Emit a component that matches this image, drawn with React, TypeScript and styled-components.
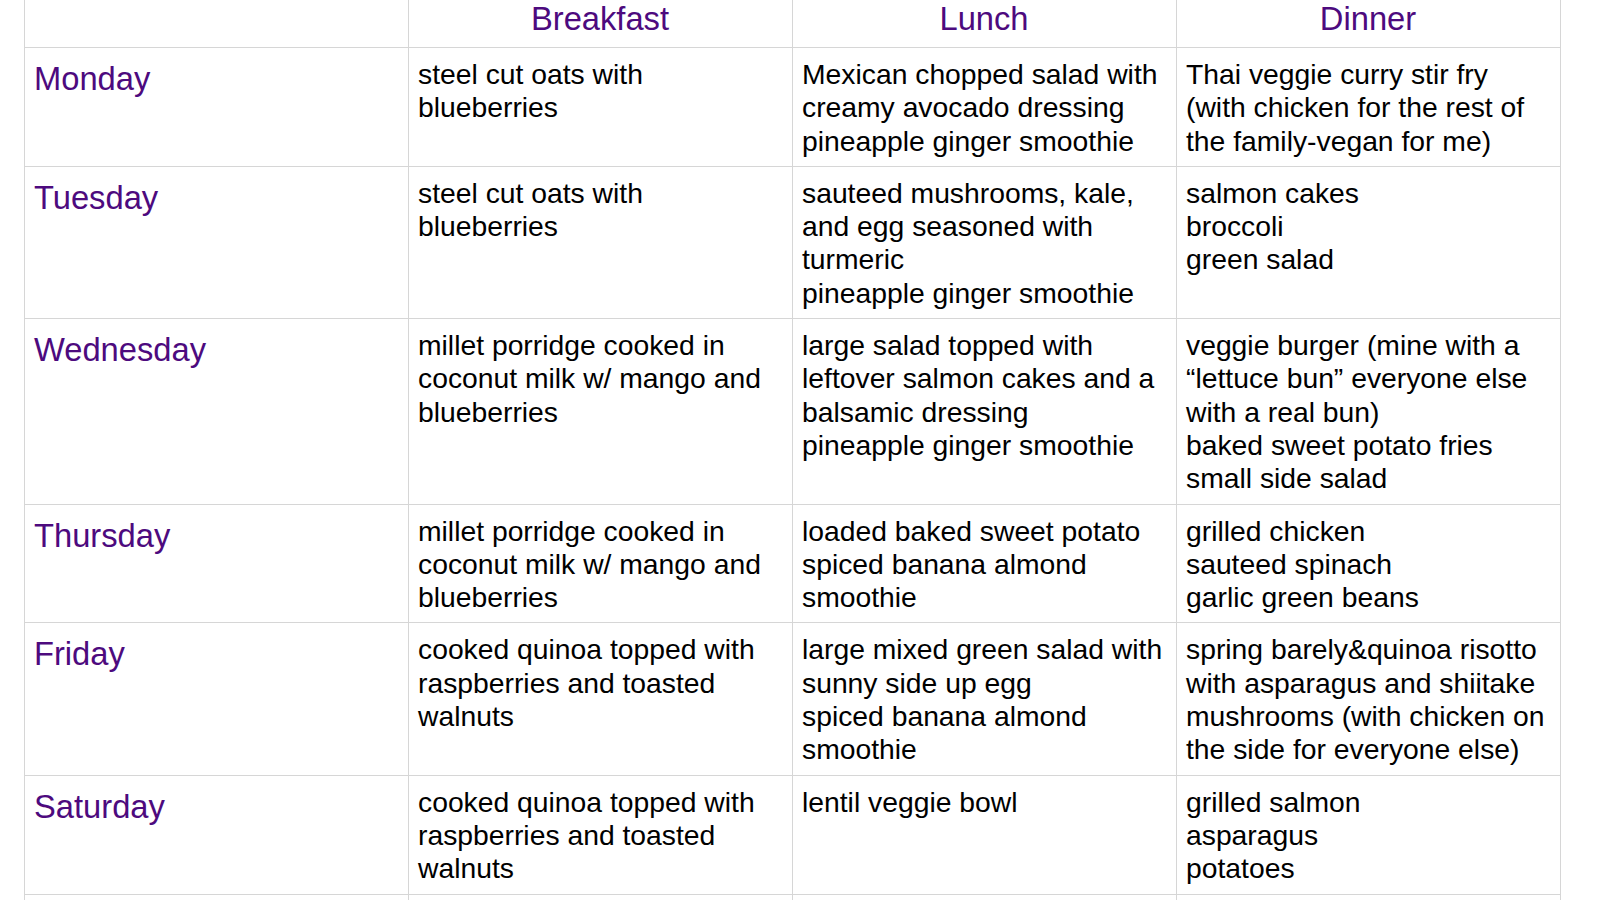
import React from "react";
import styled, { createGlobalStyle } from "styled-components";

const GlobalStyle = createGlobalStyle`
  html, body {
    margin: 0;
    padding: 0;
    background: #ffffff;
    overflow: hidden;
  }
  body {
    font-family: "Liberation Sans", Arial, Helvetica, sans-serif;
    color: #000;
  }
`;

const Page = styled.div`
  padding: 0 0 0 24px;
  margin-top: -15px;
`;

const Table = styled.table`
  width: 1536px;
  border-collapse: collapse;
  table-layout: fixed;
`;

const Col = styled.col`
  width: 384px;
`;

const Cell = styled.td`
  border: 1px solid #d6d6d6;
  padding: 10px 10px 8px 9px;
  vertical-align: top;
  font-size: 28.3px;
  line-height: 33.3px;
  color: #000;
  white-space: nowrap;
  overflow: hidden;
`;

const HeadCell = styled.th<{ $align?: "left" | "center"; $top?: number }>`
  border: 1px solid #d6d6d6;
  padding: ${(p) => p.$top ?? 9}px 10px ${(p) => 18 - (p.$top ?? 9)}px 9px;
  vertical-align: top;
  font-size: 32.7px;
  line-height: 43px;
  font-weight: normal;
  color: #4d0a7e;
  text-align: ${(p) => p.$align ?? "center"};
  white-space: nowrap;
`;

const Line = styled.div`
  display: block;
`;

type Day = {
  day: string;
  meals: string[][];
};

const days: Day[] = [
  {
    day: "Monday",
    meals: [
      ["steel cut oats with", "blueberries"],
      ["Mexican chopped salad with", "creamy avocado dressing", "pineapple ginger smoothie"],
      ["Thai veggie curry stir fry", "(with chicken for the rest of", "the family-vegan for me)"],
    ],
  },
  {
    day: "Tuesday",
    meals: [
      ["steel cut oats with", "blueberries"],
      ["sauteed mushrooms, kale,", "and egg seasoned with", "turmeric", "pineapple ginger smoothie"],
      ["salmon cakes", "broccoli", "green salad"],
    ],
  },
  {
    day: "Wednesday",
    meals: [
      ["millet porridge cooked in", "coconut milk w/ mango and", "blueberries"],
      ["large salad topped with", "leftover salmon cakes and a", "balsamic dressing", "pineapple ginger smoothie"],
      [
        "veggie burger (mine with a",
        "\u201Clettuce bun\u201D everyone else",
        "with a real bun)",
        "baked sweet potato fries",
        "small side salad",
      ],
    ],
  },
  {
    day: "Thursday",
    meals: [
      ["millet porridge cooked in", "coconut milk w/ mango and", "blueberries"],
      ["loaded baked sweet potato", "spiced banana almond", "smoothie"],
      ["grilled chicken", "sauteed spinach", "garlic green beans"],
    ],
  },
  {
    day: "Friday",
    meals: [
      ["cooked quinoa topped with", "raspberries and toasted", "walnuts"],
      ["large mixed green salad with", "sunny side up egg", "spiced banana almond", "smoothie"],
      [
        "spring barely&quinoa risotto",
        "with asparagus and shiitake",
        "mushrooms (with chicken on",
        "the side for everyone else)",
      ],
    ],
  },
  {
    day: "Saturday",
    meals: [
      ["cooked quinoa topped with", "raspberries and toasted", "walnuts"],
      ["lentil veggie bowl"],
      ["grilled salmon", "asparagus", "potatoes"],
    ],
  },
  {
    day: "",
    meals: [[""], [""], [""]],
  },
];

const MealCell: React.FC<{ lines: string[] }> = ({ lines }) => (
  <Cell>
    {lines.map((l, i) => (
      <Line key={i}>{l || "\u00A0"}</Line>
    ))}
  </Cell>
);

export default function App() {
  return (
    <>
      <GlobalStyle />
      <Page>
        <Table>
          <colgroup>
            <Col />
            <Col />
            <Col />
            <Col />
          </colgroup>
          <thead>
            <tr>
              <HeadCell $top={11} />
              <HeadCell $top={11}>Breakfast</HeadCell>
              <HeadCell $top={11}>Lunch</HeadCell>
              <HeadCell $top={11}>Dinner</HeadCell>
            </tr>
          </thead>
          <tbody>
            {days.map((d, idx) => (
              <tr key={idx}>
                <HeadCell as="td" $align="left">
                  {d.day || "\u00A0"}
                </HeadCell>
                {d.meals.map((m, i) => (
                  <MealCell key={i} lines={m} />
                ))}
              </tr>
            ))}
          </tbody>
        </Table>
      </Page>
    </>
  );
}
